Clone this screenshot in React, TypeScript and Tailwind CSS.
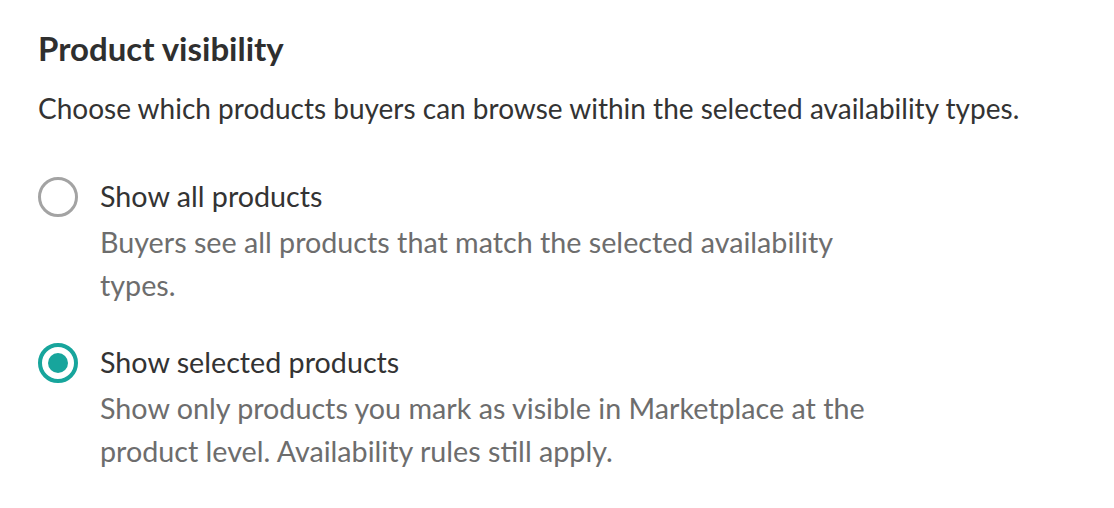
import { useState } from "react";

const options = [
  {
    id: "all",
    label: "Show all products",
    description: "Buyers see all products that match the selected availability types.",
  },
  {
    id: "selected",
    label: "Show selected products",
    description:
      "Show only products you mark as visible in Marketplace at the product level. Availability rules still apply.",
  },
];

export default function App() {
  const [value, setValue] = useState("selected");

  return (
    <div className="min-h-screen w-full bg-white pl-[38px] pt-[30px] font-['Lato','Open_Sans',sans-serif]">
      <h2 className="text-[33px] leading-[36px] font-bold text-[#2f2f2f]">Product visibility</h2>
      <p className="mt-[24px] text-[28px] leading-[36px] text-[#333333]">
        Choose which products buyers can browse within the selected availability types.
      </p>

      <div className="mt-[49px] flex flex-col gap-[34px]">
        {options.map((opt) => {
          const checked = value === opt.id;
          return (
            <label key={opt.id} className="flex cursor-pointer items-start gap-[22px]" onClick={() => setValue(opt.id)}>
              <span
                className={
                  checked
                    ? "mt-[2px] flex h-[40px] w-[40px] shrink-0 items-center justify-center rounded-full border-[4px] border-[#17a59c]"
                    : "mt-[2px] flex h-[40px] w-[40px] shrink-0 items-center justify-center rounded-full border-[3px] border-[#a3a3a3]"
                }
              >
                {checked && <span className="h-[20px] w-[20px] rounded-full bg-[#17a59c]" />}
              </span>
              <span className="flex max-w-[800px] flex-col">
                <span className="text-[28.7px] leading-[42px] text-[#333333]">{opt.label}</span>
                <span className="mt-[4px] text-[28.7px] leading-[43px] text-[#6d6d6d]">{opt.description}</span>
              </span>
            </label>
          );
        })}
      </div>
    </div>
  );
}
